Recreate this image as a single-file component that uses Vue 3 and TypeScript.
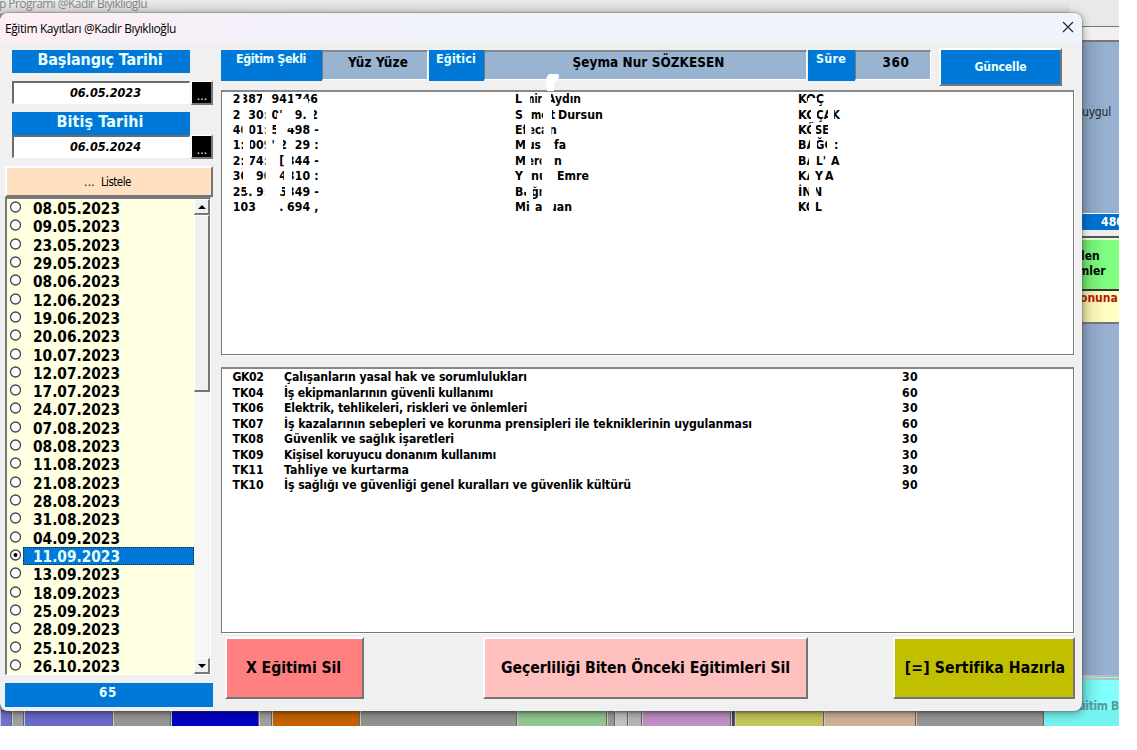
<script setup lang="ts">
import type { Directive } from 'vue'

interface Topic { code: string; name: string; minutes: number; width: number }
interface Fragment { x: number; t: string; w?: number }
interface Cut { x: number; y: number; w: number; h: number }

/* Tracks an element's text out or in until it spans the given width. */
const vFit: Directive<HTMLElement, number> = {
  mounted(el, binding) {
    const natural = el.getBoundingClientRect().width
    const count = (el.textContent ?? '').trim().length
    el.style.letterSpacing = `${(binding.value - natural) / count}px`
  },
}

const dates: string[] = [
  '08.05.2023', '09.05.2023', '23.05.2023', '29.05.2023', '08.06.2023', '12.06.2023',
  '19.06.2023', '20.06.2023', '10.07.2023', '12.07.2023', '17.07.2023', '24.07.2023',
  '07.08.2023', '08.08.2023', '11.08.2023', '21.08.2023', '28.08.2023', '31.08.2023',
  '04.09.2023', '11.09.2023', '13.09.2023', '18.09.2023', '25.09.2023', '28.09.2023',
  '25.10.2023', '26.10.2023',
]
const selected = '11.09.2023'

const topics: Topic[] = [
  { code: 'GK02', name: 'Çalışanların yasal hak ve sorumlulukları', minutes: 30, width: 243 },
  { code: 'TK04', name: 'İş ekipmanlarının güvenli kullanımı', minutes: 60, width: 209 },
  { code: 'TK06', name: 'Elektrik, tehlikeleri, riskleri ve önlemleri', minutes: 30, width: 243 },
  { code: 'TK07', name: 'İş kazalarının sebepleri ve korunma prensipleri ile tekniklerinin uygulanması', minutes: 60, width: 468 },
  { code: 'TK08', name: 'Güvenlik ve sağlık işaretleri', minutes: 30, width: 170 },
  { code: 'TK09', name: 'Kişisel koruyucu donanım kullanımı', minutes: 30, width: 212 },
  { code: 'TK11', name: 'Tahliye ve kurtarma', minutes: 30, width: 125 },
  { code: 'TK10', name: 'İş sağlığı ve güvenliği genel kuralları ve güvenlik kültürü', minutes: 90, width: 347 },
]

/* Partly hidden identity numbers: eleven slots per row. */
const ids: string[] = [
  '2387 941746',
  "2 30:0' 9.2",
  '4001:5 498-',
  "1:009'2 29:",
  '2:74: [344-',
  "30'90 4310:",
  '25.9: 5349-',
  '103   .694,',
]
const pitch = 7.75
const slotX = (row: number, slot: number): number => 232.8 + slot * pitch + (slot === 10 && row > 1 ? 4 : 0)

const firstNames: Fragment[][] = [
  [{ x: 515, t: 'L' }, { x: 525, t: 'mir', w: 17 }, { x: 547, t: 'Aydın', w: 34 }],
  [{ x: 515, t: 'S' }, { x: 531, t: 'me', w: 17 }, { x: 550, t: 't' }, { x: 558, t: 'Dursun', w: 45 }],
  [{ x: 515, t: 'Ef' }, { x: 528, t: 'eca', w: 20 }, { x: 549, t: 'n' }],
  [{ x: 515, t: 'M' }, { x: 527, t: 'us', w: 14 }, { x: 554, t: 'fa', w: 12 }],
  [{ x: 515, t: 'M' }, { x: 527, t: 'ero', w: 19 }, { x: 554, t: 'n' }],
  [{ x: 515, t: 'Y' }, { x: 531, t: 'nu', w: 16 }, { x: 557, t: 'Emre', w: 32 }],
  [{ x: 515, t: 'Bu' }, { x: 531, t: 'ğr', w: 13 }],
  [{ x: 515, t: 'Mi' }, { x: 535, t: 'a' }, { x: 549, t: 'uan', w: 23 }],
]
const lastNames: Fragment[][] = [
  [{ x: 798, t: 'KOÇ', w: 26 }],
  [{ x: 798, t: 'KO', w: 18 }, { x: 816, t: 'ÇAK', w: 24 }],
  [{ x: 798, t: 'KÖ', w: 18 }, { x: 815, t: 'SE', w: 14 }],
  [{ x: 798, t: 'BA', w: 17 }, { x: 815, t: 'ĞC', w: 18 }, { x: 834, t: ':' }],
  [{ x: 798, t: 'BA', w: 17 }, { x: 816, t: "L'", w: 10 }, { x: 831, t: 'A' }],
  [{ x: 798, t: 'KA', w: 17 }, { x: 815, t: 'Y' }, { x: 825, t: 'A' }],
  [{ x: 798, t: 'İN', w: 14 }, { x: 813, t: 'N' }],
  [{ x: 798, t: 'KO', w: 17 }, { x: 815, t: 'L' }],
]
const baseline = (row: number): number => 103.2 + row * 15.4

const cuts: Cut[] = [
  { x: 240.5, y: 92, w: 3, h: 14 }, { x: 262, y: 92, w: 8, h: 14 }, { x: 293, y: 99, w: 15, h: 8 },
  { x: 277, y: 113, w: 12, h: 7 }, { x: 265.5, y: 108, w: 6, h: 30 }, { x: 311, y: 108, w: 3, h: 12 },
  { x: 242.5, y: 124, w: 7, h: 13 }, { x: 276, y: 124, w: 8, h: 13 }, { x: 286, y: 122, w: 9, h: 6 },
  { x: 243, y: 139, w: 7, h: 30 }, { x: 265.5, y: 139, w: 6, h: 14 }, { x: 287, y: 139, w: 8, h: 14 },
  { x: 279, y: 139, w: 4, h: 14 }, { x: 265.5, y: 154, w: 8, h: 30 }, { x: 284, y: 154, w: 8, h: 30 },
  { x: 243, y: 169, w: 8, h: 15 }, { x: 246, y: 185, w: 11, h: 8 }, { x: 265, y: 185, w: 8, h: 14 },
  { x: 279, y: 185, w: 3, h: 7 }, { x: 285, y: 185, w: 7, h: 14 }, { x: 256, y: 200, w: 24, h: 9 },
  { x: 524, y: 92, w: 6, h: 14 }, { x: 542, y: 92, w: 9, h: 15 }, { x: 543, y: 108, w: 9, h: 14 },
  { x: 525, y: 123, w: 6.5, h: 14 }, { x: 543.5, y: 123, w: 8, h: 14 }, { x: 525.5, y: 139, w: 5.5, h: 30 },
  { x: 541.5, y: 154, w: 12, h: 14 }, { x: 542, y: 170, w: 12, h: 14 }, { x: 526, y: 185, w: 7, h: 14 },
  { x: 523.5, y: 185, w: 3, h: 7 }, { x: 541.5, y: 185, w: 12, h: 14 }, { x: 542, y: 200, w: 11, h: 14 },
  { x: 808, y: 98, w: 9, h: 8 }, { x: 811, y: 108, w: 6, h: 14 }, { x: 828, y: 108, w: 6, h: 14 },
  { x: 811, y: 123, w: 5, h: 14 }, { x: 828, y: 123, w: 5, h: 14 }, { x: 810, y: 139, w: 7, h: 14 },
  { x: 827, y: 139, w: 7, h: 14 }, { x: 809, y: 154, w: 7, h: 14 }, { x: 809, y: 170, w: 6, h: 14 },
  { x: 809, y: 185, w: 7, h: 14 }, { x: 809, y: 200, w: 6, h: 14 },
]
</script>

<template>
  <div class="desktop">
    <div class="back">
      <div class="back-title"><span v-fit="148">p Programı @Kadir Bıyıklıoğlu</span></div>
      <div class="back-side">
        <div class="s-menu"></div>
        <div class="s-blue top"><span v-fit="29">uygul</span></div>
        <div class="s-count">480</div>
        <div class="s-gap"></div>
        <div class="s-green"><span>len</span><span>mler</span></div>
        <div class="s-cream">onuna</div>
        <div class="s-blue rest"></div>
        <div class="s-cyan"><span v-fit="41">ğitim B</span></div>
      </div>
      <div class="back-foot">
        <i class="f1"></i><i class="f2"></i><i class="f3"></i><i class="f4"></i><i class="f5"></i><i class="f6"></i><i class="f7"></i><i class="f8"></i>
        <i class="f9"></i><i class="f10"></i><i class="f11"></i><i class="f12"></i><i class="f13"></i><i class="f14"></i><i class="f15"></i><i class="f16"></i>
        <i class="f17"></i>
      </div>
    </div>

    <section class="dialog">
      <header class="titlebar">
        <span v-fit="171">Eğitim Kayıtları @Kadir Bıyıklıoğlu</span>
        <svg width="12" height="12" viewBox="0 0 12 12"><path d="M1 1L11 11M11 1L1 11" stroke="#222" stroke-width="1.1" fill="none" /></svg>
      </header>

      <div class="body">
        <aside class="left">
          <div class="caption"><span v-fit="125">Başlangıç Tarihi</span></div>
          <div class="picker first"><div class="date"><span v-fit="71">06.05.2023</span></div><button class="dots">...</button></div>
          <div class="caption"><span v-fit="87">Bitiş Tarihi</span></div>
          <div class="picker"><div class="date"><span v-fit="71">06.05.2024</span></div><button class="dots">...</button></div>
          <button class="raised list-btn"><span class="ell">...</span><span v-fit="30">Listele</span></button>
          <div class="dates">
            <div class="rows">
              <div v-for="d in dates" :key="d" class="row" :class="{ on: d === selected }">
                <svg class="radio" width="13" height="13" viewBox="0 0 13 13">
                  <circle cx="6.5" cy="6" r="5" fill="#fff" stroke="#484848" stroke-width="1.3" />
                  <circle v-if="d === selected" cx="6.5" cy="6" r="2" fill="#000" />
                </svg>
                <div class="cell"><span v-fit="87">{{ d }}</span></div>
              </div>
            </div>
            <div class="scroll">
              <div class="arrow"><svg width="8" height="4" viewBox="0 0 8 4"><path d="M0 4L4 0L8 4Z" /></svg></div>
              <div class="thumb"></div>
              <div class="track"></div>
              <div class="arrow"><svg width="8" height="4" viewBox="0 0 8 4"><path d="M0 0L4 4L8 0Z" /></svg></div>
            </div>
          </div>
          <div class="total"><span v-fit="18">65</span></div>
        </aside>

        <main class="right">
          <div class="head">
            <div class="tag t1"><span v-fit="70">Eğitim Şekli</span></div>
            <div class="field w1"><span v-fit="60">Yüz Yüze</span></div>
            <div class="tag t2"><span v-fit="40">Eğitici</span></div>
            <div class="field w2"><span v-fit="152">Şeyma Nur SÖZKESEN</span></div>
            <div class="tag t3"><span v-fit="30">Süre</span></div>
            <div class="field w3"><span v-fit="27">360</span></div>
            <button class="raised update"><span v-fit="52">Güncelle</span></button>
          </div>

          <div class="box people">
            <svg width="849" height="261" viewBox="223 92 849 261">
              <g v-for="(id, r) in ids" :key="r">
                <template v-for="(c, i) in id" :key="i">
                  <text v-if="c !== ' '" :x="slotX(r, i)" :y="baseline(r)">{{ c }}</text>
                </template>
                <text v-for="f in firstNames[r]" :key="f.x" :x="f.x" :y="baseline(r)" :textLength="f.w" lengthAdjust="spacingAndGlyphs">{{ f.t }}</text>
                <text v-for="f in lastNames[r]" :key="f.x" :x="f.x" :y="baseline(r)" :textLength="f.w" lengthAdjust="spacingAndGlyphs">{{ f.t }}</text>
              </g>
              <rect v-for="(c, i) in cuts" :key="'c' + i" :x="c.x" :y="c.y" :width="c.w" :height="c.h" fill="#fff" />
            </svg>
            <svg class="smear" width="14" height="17" viewBox="0 0 14 17"><path d="M2 1Q3 0 4 0H12Q13 0 13 3L12 6L9 8Q8 9 8 12V17H1Q0 9 0 5Z" fill="#fff" /></svg>
          </div>

          <div class="box topics">
            <div v-for="t in topics" :key="t.code" class="topic">
              <div class="code"><span v-fit="31">{{ t.code }}</span></div>
              <div class="name"><span v-fit="t.width">{{ t.name }}</span></div>
              <div><span v-fit="16">{{ t.minutes }}</span></div>
            </div>
          </div>

          <div class="actions">
            <button class="raised del"><span v-fit="95">X Eğitimi Sil</span></button>
            <button class="raised old"><span v-fit="289">Geçerliliği Biten Önceki Eğitimleri Sil</span></button>
            <button class="raised cert"><span v-fit="160">[=] Sertifika Hazırla</span></button>
          </div>
        </main>
      </div>
    </section>
  </div>
</template>

<style>
body { background: #fff; }
</style>

<style scoped>
* { box-sizing: border-box; }
.desktop {
  position: relative; width: 1119px; height: 726px; overflow: hidden;
  font-family: "DejaVu Sans Condensed", "DejaVu Sans", sans-serif; font-stretch: condensed;
  font-weight: bold; font-size: 12.2px; color: #000; white-space: nowrap;
}
span { display: inline-block; }
button { font: inherit; color: inherit; padding: 0; margin: 0; border-radius: 0; }

.back { position: absolute; inset: 0; background: linear-gradient(#e9e9e9, #d8d8d8 13px, #999 14px); }
.back-title { position: absolute; left: -1px; top: -5px; font: 12px/18px "Open Sans", sans-serif; color: #858585; }
.back-side { position: absolute; left: 1070px; top: 0; width: 49px; height: 726px; display: flex; flex-direction: column; padding-left: 12px; background: #eee; }
.s-menu { height: 42px; border-bottom: 2px solid #777; background: linear-gradient(#e9e9e9 0 26px, #777 26px 27px, #f0f0f0 27px); margin-left: -12px; }
.s-blue { background: linear-gradient(90deg, #859cb9, #97b1d2 24px); }
.s-blue.top { height: 171px; padding-top: 62px; font: 12px/17px "DejaVu Sans Condensed", sans-serif; color: #222; }
.s-count { height: 17px; background: #0070cc; color: #fff; padding-left: 19px; line-height: 16px; border-top: 1px solid #fff; }
.s-gap { height: 8px; border-bottom: 2px solid #555; }
.s-green { height: 51px; display: flex; flex-direction: column; background: linear-gradient(90deg, #6ddc6d, #80ff80 24px); border-top: 2px solid #dfffd8; padding-top: 9px; line-height: 15px; font-size: 12px; }
.s-green span:first-child { margin-left: -1px; }
.s-green span:last-child { margin-left: -4px; }
.s-cream { height: 35px; border-top: 2px solid #333; border-bottom: 2px solid #777; background: linear-gradient(90deg, #e2dca0, #ffffc4 26px); color: #b01800; line-height: 14px; font-size: 12px; margin-left: -2px; }
.s-blue.rest { height: 351px; }
.s-cyan { height: 51px; border-top: 5px double #bbb; background: linear-gradient(90deg, #66d8d8, #80ffff 24px); color: #5a9a9a; padding-top: 19px; margin-left: -4px; font-size: 12px; line-height: 15px; }
.back-foot { position: absolute; left: 0; top: 710px; height: 16px; width: 1119px; display: flex; background: #969696; }
.back-foot i { border-left: 1px solid #ccc; border-right: 1px solid #666; box-shadow: inset 0 4px 3px -2px #0005; }
.f1 { width: 12px; background: #7070d0; }
.f2 { width: 12px; background: #a0a0a0; }
.f3 { width: 89px; background: #6b6bcd; }
.f4 { width: 58px; background: #979797; }
.f5 { width: 88px; background: #0000c4; }
.f6 { width: 13px; background: #a0a0a0; }
.f7 { width: 88px; background: #c66300; }
.f8 { width: 157px; background: #919191; }
.f9 { width: 90px; background: #92c892; }
.f10 { width: 8px; background: #999; }
.f11 { width: 13px; background: #c2c2c2; }
.f12 { width: 14px; background: #b5b5b5; }
.f13 { width: 89px; background: #c18fc5; }
.f14 { width: 4px; background: #444; }
.f15 { width: 89px; background: #c5c55c; }
.f16 { width: 92px; background: #ceb199; }
.f17 { width: 128px; background: #969696; }
.back-foot i.f17 { box-shadow: 76px 0 0 #75f3f1, inset 0 4px 3px -2px #0005; }

.dialog { position: absolute; left: 0; top: 13px; width: 1082px; height: 698px; background: #f0f0f0; border-radius: 8px; overflow: hidden; box-shadow: 0 0 2px #555, 0 2px 10px #0006; }
.titlebar { height: 30px; padding: 0 8px 0 5px; display: flex; justify-content: space-between; align-items: center; font: 12px "Open Sans", sans-serif; background: linear-gradient(90deg, #fdeef3, #f4f0fa 260px, #eff3fb 480px); }
.titlebar svg { margin-top: -2px; }
.body { display: flex; gap: 8px; padding: 5px 0 0 5px; }

.left { flex: none; width: 208px; padding-top: 2px; display: flex; flex-direction: column; }
.caption { width: 178px; margin-left: 7px; height: 23px; background: #0078d7; color: #e8ffff; font-size: 16px; line-height: 20px; text-align: center; padding-right: 2px; }
.picker { display: flex; margin-left: 7px; height: 24px; justify-content: space-between; }
.picker.first { margin: 8px 0 7px 7px; }
.date { width: 178px; height: 23px; background: #fff; border: 1px solid #fff; border-left: 2px solid #6b6b6b; border-top: 2px solid #6b6b6b; font-style: italic; text-align: center; line-height: 20px; padding-left: 8px; font-size: 12.5px; }
.dots { width: 22px; height: 24px; background: #000; color: #fff; border: 1px solid #fff; border-right: 2px solid #777; border-bottom: 2px solid #777; line-height: 20px; padding: 4px 0 0 1px; font-size: 12px; font-weight: normal; overflow: hidden; }
.raised { border: 2px solid #fff; border-right-color: #757575; border-bottom-color: #757575; display: flex; align-items: center; justify-content: center; }
.list-btn { height: 31px; margin-top: 7px; background: #ffe0c0; font-weight: normal; font-size: 11.5px; gap: 6px; padding-right: 3px; }
.list-btn .ell { letter-spacing: 0.3px; }
.dates { height: 478px; width: 206px; border: 1px solid #fff; border-left: 2px solid #777; border-top: 2px solid #777; background: #ffffe1; display: flex; overflow: hidden; }
.rows { flex: 1; }
.row { height: 18.32px; display: flex; padding-left: 2px; }
.radio { margin-top: 2px; flex: none; }
.cell { flex: 1; margin-left: 1px; padding-left: 10px; font-size: 15.3px; line-height: 20px; height: 18.32px; }
.on .cell { background: #0078d7; color: #e8ffff; outline: 1px dotted #222; outline-offset: -1px; }
.scroll { width: 16px; display: flex; flex-direction: column; }
.arrow, .thumb { background: #f0f0f0; border: 1px solid #fff; border-right: 2px solid #777; border-bottom: 2px solid #777; }
.arrow { height: 16px; flex: none; display: flex; align-items: center; justify-content: center; }
.thumb { height: 177px; }
.track { flex: 1; background: #f7f7f7; }
.total { margin-top: 8px; height: 24px; background: #0078d7; color: #e8ffff; text-align: center; line-height: 19px; font-size: 13.3px; padding-right: 2px; }

.right { flex: none; width: 854px; display: flex; flex-direction: column; }
.head { display: flex; height: 38px; align-items: flex-start; }
.tag { height: 31px; margin-top: 2px; background: #0078d7; color: #e8ffff; text-align: center; line-height: 17px; font-size: 12.4px; padding-right: 1px; }
.t1 { width: 101px; }
.t2 { width: 55px; margin-left: 1px; }
.t3 { width: 47px; margin-left: 1px; }
.field { height: 30px; margin-top: 2px; background: #99b4d1; border: 1px solid #fff; border-left-color: #777; border-top: 2px solid #808890; text-align: center; line-height: 22px; font-size: 13.4px; }
.w1 { width: 106px; padding-left: 6px; }
.w2 { width: 323px; padding-left: 6px; }
.w3 { width: 76px; padding-left: 6px; }
.update { width: 123px; height: 38px; margin-left: 8px; background: #0078d7; color: #e8ffff; font-size: 12.2px; }
.box { width: 853px; background: #fff; border: 1px solid #777; border-top: 2px solid #888; box-shadow: 1px 1px #fff; }
.people { position: relative; height: 265px; margin-top: 4px; }
.people > svg { display: block; margin-left: 1px; }
.people text { font-size: 12.2px; fill: #000; }
.people > .smear { position: absolute; left: 323px; top: -18px; }
.topics { height: 266px; margin-top: 12px; padding: 0.4px 0 0 10.5px; }
.topic { height: 15.43px; line-height: 16px; display: flex; }
.code { width: 51.5px; }
.name { width: 618px; }
.actions { display: flex; margin-top: 4px; padding-left: 4px; font-size: 15.7px; }
.actions .raised { height: 62px; flex: none; padding-bottom: 2px; }
.del { width: 139px; background: #ff8080; padding-right: 2px; }
.old { width: 325px; background: #ffc0c0; margin-left: 119px; }
.cert { width: 182px; background: #c0c000; margin-left: 85px; padding-left: 2px; }
</style>
